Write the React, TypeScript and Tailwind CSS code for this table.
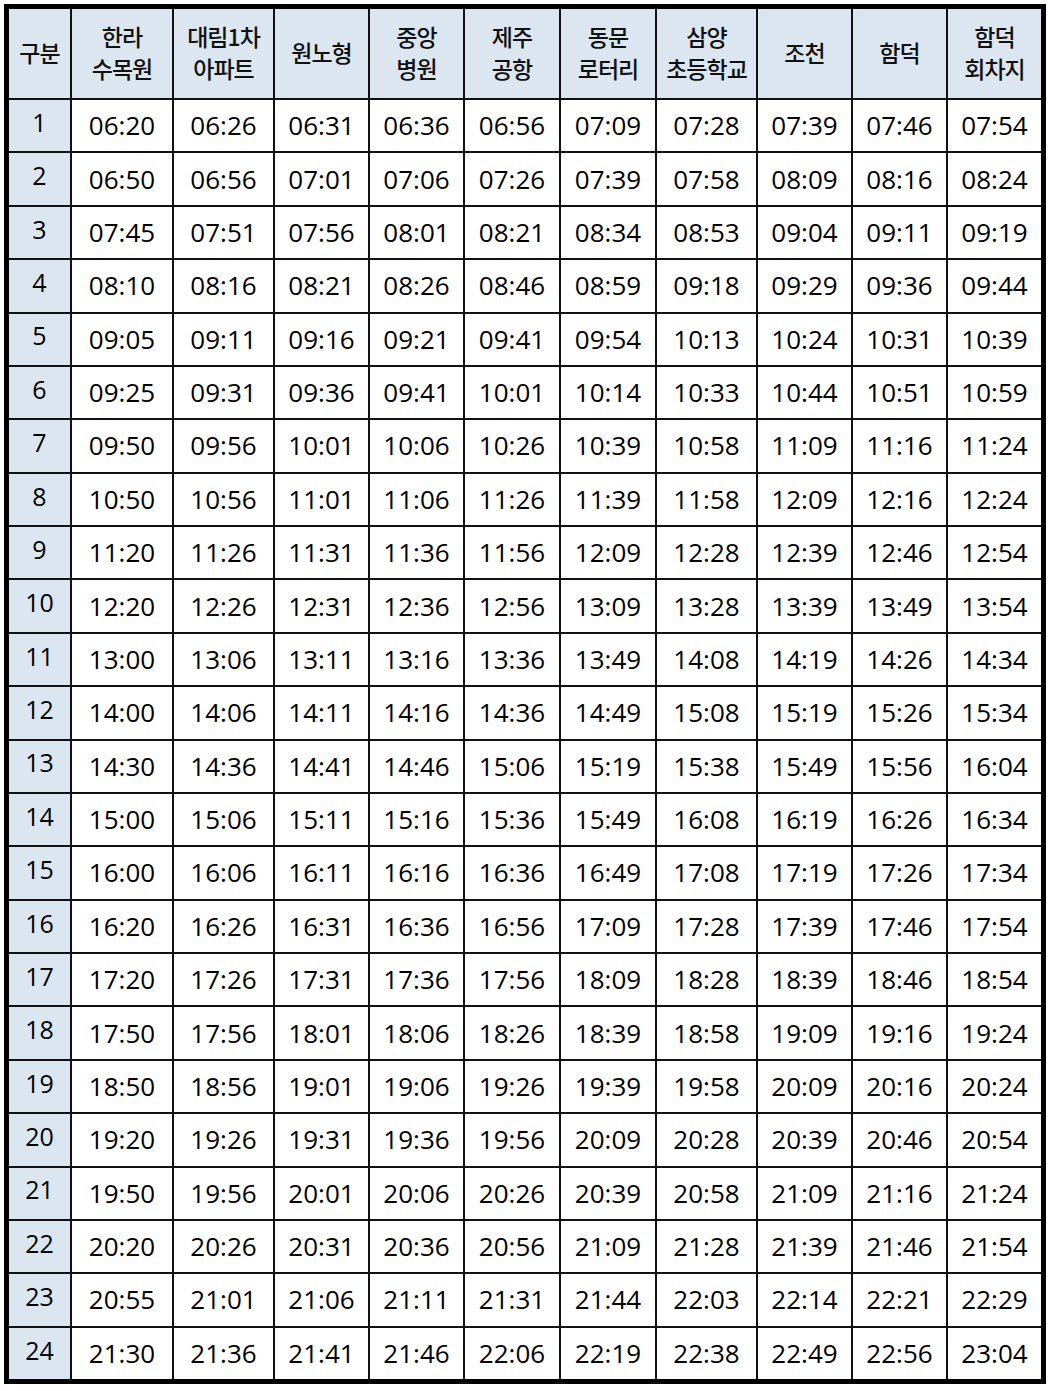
import React from 'react';

const STOPS = [
  ['한라', '수목원'],
  ['대림1차', '아파트'],
  ['원노형'],
  ['중앙', '병원'],
  ['제주', '공항'],
  ['동문', '로터리'],
  ['삼양', '초등학교'],
  ['조천'],
  ['함덕'],
  ['함덕', '회차지'],
];

// one line per trip, times in stop order
const TRIPS = `06:20 06:26 06:31 06:36 06:56 07:09 07:28 07:39 07:46 07:54
06:50 06:56 07:01 07:06 07:26 07:39 07:58 08:09 08:16 08:24
07:45 07:51 07:56 08:01 08:21 08:34 08:53 09:04 09:11 09:19
08:10 08:16 08:21 08:26 08:46 08:59 09:18 09:29 09:36 09:44
09:05 09:11 09:16 09:21 09:41 09:54 10:13 10:24 10:31 10:39
09:25 09:31 09:36 09:41 10:01 10:14 10:33 10:44 10:51 10:59
09:50 09:56 10:01 10:06 10:26 10:39 10:58 11:09 11:16 11:24
10:50 10:56 11:01 11:06 11:26 11:39 11:58 12:09 12:16 12:24
11:20 11:26 11:31 11:36 11:56 12:09 12:28 12:39 12:46 12:54
12:20 12:26 12:31 12:36 12:56 13:09 13:28 13:39 13:49 13:54
13:00 13:06 13:11 13:16 13:36 13:49 14:08 14:19 14:26 14:34
14:00 14:06 14:11 14:16 14:36 14:49 15:08 15:19 15:26 15:34
14:30 14:36 14:41 14:46 15:06 15:19 15:38 15:49 15:56 16:04
15:00 15:06 15:11 15:16 15:36 15:49 16:08 16:19 16:26 16:34
16:00 16:06 16:11 16:16 16:36 16:49 17:08 17:19 17:26 17:34
16:20 16:26 16:31 16:36 16:56 17:09 17:28 17:39 17:46 17:54
17:20 17:26 17:31 17:36 17:56 18:09 18:28 18:39 18:46 18:54
17:50 17:56 18:01 18:06 18:26 18:39 18:58 19:09 19:16 19:24
18:50 18:56 19:01 19:06 19:26 19:39 19:58 20:09 20:16 20:24
19:20 19:26 19:31 19:36 19:56 20:09 20:28 20:39 20:46 20:54
19:50 19:56 20:01 20:06 20:26 20:39 20:58 21:09 21:16 21:24
20:20 20:26 20:31 20:36 20:56 21:09 21:28 21:39 21:46 21:54
20:55 21:01 21:06 21:11 21:31 21:44 22:03 22:14 22:21 22:29
21:30 21:36 21:41 21:46 22:06 22:19 22:38 22:49 22:56 23:04`
  .split('\n')
  .map((line) => line.split(' '));

export default function App() {
  return (
    <div className="min-h-[1391px] w-[1050px] bg-white pl-[4px] pt-[4px]">
      <div className="grid h-[1380px] w-[1042px] grid-cols-[61px_100px_99px_93px_93px_94px_94px_99px_93px_93px_93px] grid-rows-[89px_repeat(24,minmax(0,1fr))] gap-[2px] border-[5px] border-black bg-[#111]">
        {/* header */}
        <div className="flex items-center justify-center bg-[#dce6f1] pb-1 font-['Noto_Sans_CJK_KR',sans-serif] text-[23px] leading-[32px] font-medium tracking-[-1px] text-[#111]">
          구분
        </div>
        {STOPS.map((lines, i) => (
          <div
            key={i}
            className="flex flex-col items-center justify-center bg-[#dce6f1] pb-1 font-['Noto_Sans_CJK_KR',sans-serif] text-[23px] leading-[32px] font-medium tracking-[-1px] whitespace-nowrap text-[#111]">
            {lines.map((l, j) => (
              <span key={j}>{l}</span>
            ))}
          </div>
        ))}

        {/* trips */}
        {TRIPS.map((times, r) => (
          <React.Fragment key={r}>
            <div className="flex items-center justify-center bg-[#dce6f1] pb-[6px] font-['Open_Sans','Noto_Sans',sans-serif] text-[25px] text-black">
              {r + 1}
            </div>
            {times.map((t, c) => (
              <div
                key={c}
                className="flex items-center justify-center bg-white font-['Open_Sans','Noto_Sans',sans-serif] text-[26px] text-black">
                {t}
              </div>
            ))}
          </React.Fragment>
        ))}
      </div>
    </div>
  );
}
